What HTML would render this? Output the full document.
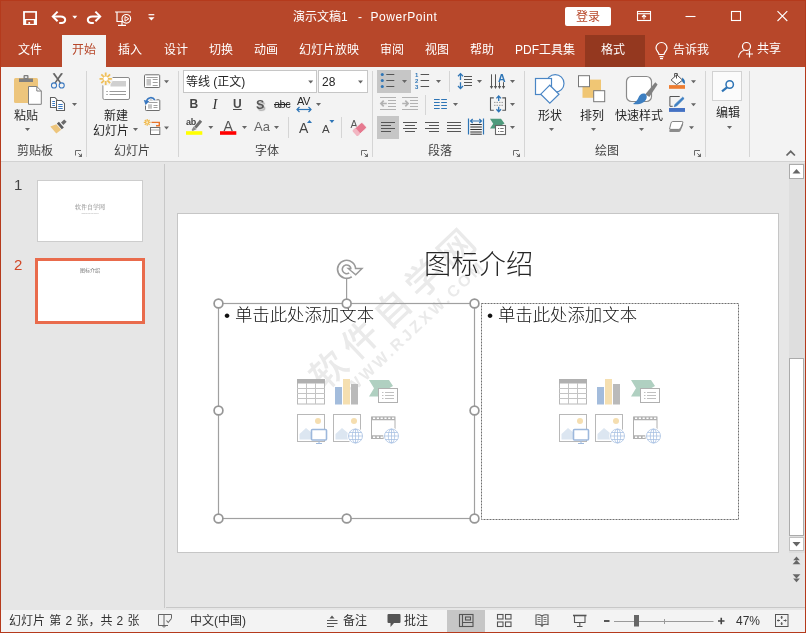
<!DOCTYPE html>
<html lang="zh-CN">
<head>
<meta charset="utf-8">
<title>演示文稿1 - PowerPoint</title>
<style>
*{box-sizing:border-box;margin:0;padding:0}
html,body{width:806px;height:633px;overflow:hidden;background:#e6e6e6}
body{font-family:"Liberation Sans","Noto Sans CJK SC",sans-serif;font-size:12px;color:#262626;position:relative}
#wrap{position:absolute;left:0;top:0;width:806px;height:633px;will-change:transform;overflow:hidden}
.abs{position:absolute}
#title{position:absolute;left:0;top:0;width:806px;height:67px;background:#b7472a}
.tt{position:absolute;color:#fff;white-space:nowrap;line-height:14px;font-size:12px}
.tab{position:absolute;top:43px;color:#fff;white-space:nowrap;line-height:14px;font-size:12px}
#ribbon{position:absolute;left:0;top:67px;width:806px;height:95px;background:#f3f3f3;border-bottom:1px solid #d2d2d2}
.gl{position:absolute;top:77px;font-size:12px;line-height:14px;color:#444;white-space:nowrap}
.sep{position:absolute;top:4px;width:1px;height:86px;background:#d5d5d5}
.lbl{position:absolute;font-size:12px;line-height:14px;color:#262626;white-space:nowrap}
#status{position:absolute;left:0;top:610px;width:806px;height:23px;background:#f3f3f3}
.st{position:absolute;top:4px;font-size:12px;line-height:14px;color:#333;white-space:nowrap}
#icons{position:absolute;left:0;top:0;width:806px;height:633px;pointer-events:none}
#frame{position:absolute;left:0;top:0;width:806px;height:633px;border:1px solid #b53a1c;pointer-events:none}
</style>
</head>
<body>
<div id="wrap">
<div id="title">
  <div class="tt" style="left:293px;top:10px">演示文稿1</div>
  <div class="tt" style="left:358px;top:10px">-</div>
  <div class="tt" style="left:370.5px;top:10px;letter-spacing:0.55px">PowerPoint</div>
  <div class="abs" style="left:565px;top:7px;width:46px;height:19px;background:#fff;border-radius:2px;color:#b7472a;font-size:12px;line-height:20px;text-align:center">登录</div>
  <div class="abs" style="left:62px;top:35px;width:44px;height:33px;background:#f3f3f3"></div>
  <div class="abs" style="left:585px;top:35px;width:60px;height:32px;background:#94381f"></div>
  <div class="tab" style="left:18px">文件</div>
  <div class="tab" style="left:72px;color:#b7472a">开始</div>
  <div class="tab" style="left:118px">插入</div>
  <div class="tab" style="left:164px">设计</div>
  <div class="tab" style="left:209px">切换</div>
  <div class="tab" style="left:254px">动画</div>
  <div class="tab" style="left:299px">幻灯片放映</div>
  <div class="tab" style="left:380px">审阅</div>
  <div class="tab" style="left:425px">视图</div>
  <div class="tab" style="left:470px">帮助</div>
  <div class="tab" style="left:515px">PDF工具集</div>
  <div class="tab" style="left:601px">格式</div>
  <div class="tab" style="left:673px">告诉我</div>
  <div class="tab" style="left:757px;top:42px">共享</div>
</div>
<div id="ribbon">
  <div class="sep" style="left:86px"></div>
  <div class="sep" style="left:178px"></div>
  <div class="sep" style="left:372px"></div>
  <div class="sep" style="left:524px"></div>
  <div class="sep" style="left:705px"></div>
  <div class="sep" style="left:749px"></div>
  <div class="abs" style="left:288px;top:50px;width:1px;height:21px;background:#d5d5d5"></div>
  <div class="abs" style="left:341px;top:50px;width:1px;height:21px;background:#d5d5d5"></div>
  <div class="abs" style="left:449px;top:4px;width:1px;height:21px;background:#d5d5d5"></div>
  <div class="abs" style="left:425px;top:28px;width:1px;height:20px;background:#d5d5d5"></div>
  <div class="abs" style="left:377px;top:3px;width:34px;height:23px;background:#c6c6c6"></div>
  <div class="abs" style="left:377px;top:49px;width:22px;height:23px;background:#c6c6c6"></div>
  <div class="abs" style="left:712px;top:4px;width:30px;height:30px;background:#fbfbfb;border:1px solid #d2d2d2"></div>
  <div class="gl" style="left:17px">剪贴板</div>
  <div class="gl" style="left:114px">幻灯片</div>
  <div class="gl" style="left:255px">字体</div>
  <div class="gl" style="left:428px">段落</div>
  <div class="gl" style="left:595px">绘图</div>
  <div class="lbl" style="left:14px;top:41.5px">粘贴</div>
  <div class="lbl" style="left:104px;top:41.5px">新建</div>
  <div class="lbl" style="left:93px;top:56.5px">幻灯片</div>
  <div class="lbl" style="left:538px;top:41.5px">形状</div>
  <div class="lbl" style="left:580px;top:41.5px">排列</div>
  <div class="lbl" style="left:615px;top:41.5px">快速样式</div>
  <div class="lbl" style="left:716px;top:39px">编辑</div>
  <div class="abs" style="left:183px;top:3px;width:134px;height:23px;background:#fff;border:1px solid #c6c6c6"></div>
  <div class="abs" style="left:318px;top:3px;width:50px;height:23px;background:#fff;border:1px solid #c6c6c6"></div>
  <div class="lbl" style="left:186px;top:8px">等线 (正文)</div>
  <div class="lbl" style="left:322px;top:8px">28</div>
  <div class="lbl" style="left:189.5px;top:30px;font-weight:bold;font-size:12px;color:#444">B</div>
  <div class="lbl" style="left:212.5px;top:30px;font-style:italic;font-family:'Liberation Serif',serif;font-size:14.5px;color:#333">I</div>
  <div class="lbl" style="left:233px;top:30px;text-decoration:underline;font-size:12px;font-weight:bold;color:#4a4a4a">U</div>
  <div class="lbl" style="left:256px;top:31px;font-weight:bold;font-size:12.5px;color:#555;text-shadow:1.5px 1.5px 1px #b0b0b0">S</div>
  <div class="lbl" style="left:274px;top:30px;text-decoration:line-through;font-size:11px;letter-spacing:-0.5px">abc</div>
  <div class="lbl" style="left:297px;top:27px;font-size:11px;letter-spacing:-0.5px">AV</div>
  <div class="lbl" style="left:186px;top:50px;font-size:9px;line-height:10px;color:#444;font-weight:bold;letter-spacing:-0.3px">ab</div>
  <div class="lbl" style="left:223.5px;top:52px;font-size:14px;line-height:14px;color:#555">A</div>
  <div class="lbl" style="left:254px;top:52.5px;font-size:13px;line-height:14px;color:#666">Aa</div>
  <div class="lbl" style="left:299px;top:54px;font-size:14px;line-height:14px;color:#444">A</div>
  <div class="lbl" style="left:322px;top:56px;font-size:11.5px;line-height:12px;color:#444">A</div>
  <div class="lbl" style="left:350.5px;top:52px;font-size:10.5px;line-height:10px;color:#555">A</div>
  <div class="lbl" style="left:498px;top:6px;font-size:10.5px;line-height:10px;font-weight:bold;color:#2e75b6">A</div>
  <div class="abs" style="left:415px;top:5px;font-size:6px;line-height:6px;font-weight:bold;color:#2e75b6">1<br>2<br>3</div>
</div>
<div class="abs" style="left:164px;top:164px;width:1px;height:444px;background:#c8c8c8"></div>
<div class="abs" style="left:166px;top:607px;width:640px;height:1px;background:#c8c8c8"></div>
<div class="abs" style="left:37px;top:180px;width:106px;height:62px;background:#fff;border:1px solid #cdcdcd"></div>
<div class="abs" style="left:74px;top:203px;width:32px;text-align:center;font-family:'Liberation Serif','Noto Serif CJK SC',serif;font-size:6px;line-height:8px;color:#888;white-space:nowrap">软件自学网</div>
<div class="abs" style="left:80px;top:212px;width:20px;text-align:center;font-size:2.5px;line-height:4px;color:#aaa;white-space:nowrap">www.rjzxw.com</div>
<div class="abs" style="left:35px;top:258px;width:110px;height:66px;background:#fff;border:3px solid #e96b4c"></div>
<div class="abs" style="left:80px;top:266px;width:20px;text-align:center;font-size:5px;line-height:8px;color:#777;white-space:nowrap">图标介绍</div>
<div class="abs" style="left:14px;top:176px;font-size:15px;line-height:18px;color:#444">1</div>
<div class="abs" style="left:14px;top:256px;font-size:15px;line-height:18px;color:#d24726">2</div>
<div class="abs" style="left:177px;top:213px;width:602px;height:340px;background:#fff;border:1px solid #c6c6c6;overflow:hidden">
  <div class="abs" style="left:215px;top:96px;width:0;height:0"><div id="wm1" style="position:absolute;transform:translate(-50%,-50%) rotate(-43.500deg);font-size:36px;line-height:38px;letter-spacing:8px;padding-left:8px;font-weight:500;color:#eaeaea;white-space:nowrap">软件自学网</div></div>
  <div class="abs" style="left:237px;top:114px;width:0;height:0"><div id="wm2" style="position:absolute;transform:translate(-50%,-50%) rotate(-43.300deg);font-size:16px;line-height:18px;letter-spacing:3px;padding-left:3px;font-weight:bold;color:#eaeaea;white-space:nowrap">WWW.RJZXW.COM</div></div>
</div>
<div class="abs" style="left:424px;top:246.5px;font-size:27.3px;line-height:36px;font-weight:300;color:#262626;white-space:nowrap">图标介绍</div>
<div class="abs" style="left:224px;top:303px;font-size:17.4px;line-height:24px;color:#111;white-space:nowrap;font-weight:300">• 单击此处添加文本</div>
<div class="abs" style="left:487px;top:303px;font-size:17.4px;line-height:24px;color:#111;white-space:nowrap;font-weight:300">• 单击此处添加文本</div>
<!-- scrollbar -->
<div class="abs" style="left:789px;top:163px;width:16px;height:390px;background:#dedede"></div>
<div class="abs" style="left:789px;top:164px;width:15px;height:15px;background:#fff;border:1px solid #ababab"></div>
<div class="abs" style="left:789px;top:537px;width:15px;height:14px;background:#fff;border:1px solid #c0c0c0"></div>
<div class="abs" style="left:789px;top:358px;width:15px;height:178px;background:#fff;border:1px solid #ababab"></div>
<div id="status">
  <div class="abs" style="left:447px;top:0;width:38px;height:23px;background:#c6c6c6"></div>
  <div class="st" style="left:9px;word-spacing:0.9px">幻灯片 第 2 张，共 2 张</div>
  <div class="st" style="left:190px">中文(中国)</div>
  <div class="st" style="left:343px">备注</div>
  <div class="st" style="left:404px">批注</div>
  <div class="st" style="left:736px">47%</div>
</div>
<svg id="icons" viewBox="0 0 806 633" width="806" height="633">
<defs>
  <polygon id="car" points="0,0 5,0 2.5,3" fill="#666"/>
  <g id="launch"><path d="M0.500,5.500 V0.500 H6" stroke="#6a6a6a" fill="none"/><path d="M3.300,3.300 L6,6" stroke="#6a6a6a" fill="none"/><polygon points="7,3.300 7,7 3.300,7" fill="#6a6a6a"/></g>
  <g id="globe" fill="#fff" stroke="#a6bfe1" stroke-width="0.75"><circle cx="0" cy="0" r="8.300" stroke="none"/><circle cx="0" cy="0" r="7"/><ellipse cx="0" cy="0" rx="3.2" ry="7" fill="none"/><path d="M-7,0 H7 M0,-7 V7 M-6,-3.5 H6 M-6,3.5 H6" fill="none"/></g>
  <g id="phicons">
    <!-- table -->
    <rect x="297.5" y="379.5" width="27" height="24.5" fill="#fff" stroke="#b8b8b8"/>
    <rect x="297" y="379" width="28" height="4.5" fill="#b0b0b0"/>
    <path d="M306.5,383 V404 M315.5,383 V404 M297,388.5 H325 M297,393.5 H325 M297,398.5 H325" stroke="#c4c4c4" fill="none"/>
    <!-- chart -->
    <rect x="335" y="387" width="7" height="17.5" fill="#a3bcdc"/>
    <rect x="343" y="379" width="7" height="25.5" fill="#f5dfb0"/>
    <rect x="351" y="384" width="7" height="20.5" fill="#bababa"/>
    <!-- smartart -->
    <polygon points="369,380 389,380 393,386 389.5,388 378.5,388 378.5,396.5 369,396.5 374,388.2" fill="#b0d0c1"/>
    <rect x="378.5" y="388.5" width="19" height="14" fill="#fff" stroke="#b0b0b0"/>
    <path d="M382,392.5 h1.5 M385,392.5 h9 M382,395.5 h1.5 M385,395.5 h9 M382,398.5 h1.5 M385,398.5 h9" stroke="#c0c0c0" fill="none"/>
    <!-- picture -->
    <rect x="297.5" y="414.5" width="27" height="27" fill="#fff" stroke="#b8b8b8"/>
    <circle cx="318" cy="421" r="3" fill="#f5deb0"/>
    <polygon points="299.5,439.5 299.5,434 306,428 312,433 312,439.5" fill="#dce6f1"/>
    <rect x="311.5" y="429.5" width="15" height="10.5" rx="1" fill="#fff" stroke="#9db8dc" stroke-width="1.6"/>
    <path d="M319,441 v2 M316,443.5 h6" stroke="#9db8dc" fill="none"/>
    <!-- online picture -->
    <rect x="333.5" y="414.5" width="27" height="27" fill="#fff" stroke="#b8b8b8"/>
    <circle cx="354" cy="421" r="3" fill="#f5deb0"/>
    <polygon points="335.5,439.5 335.5,434 342,428 348,433 348,439.5" fill="#dce6f1"/>
    <use href="#globe" x="355.5" y="436"/>
    <!-- video -->
    <rect x="371.5" y="417" width="23.5" height="21.5" fill="#fff" stroke="#b0b0b0"/>
    <path d="M372,418.5 h23 M372,437 h12" stroke="#b0b0b0" stroke-width="3.4" fill="none"/>
    <path d="M373,418.3 h22 M373,437.2 h11" stroke="#fff" stroke-width="1.6" stroke-dasharray="2.2 1.6" fill="none"/>
    <use href="#globe" x="391.5" y="436"/>
  </g>
  <g id="handle"><circle r="4.400" fill="#fff" stroke="#969696" stroke-width="1.700"/></g>
</defs>

<!-- ===== Title bar QAT ===== -->
<rect x="23.1" y="11.1" width="13.9" height="13.9" fill="#fff"/>
<rect x="24.9" y="12.7" width="10.3" height="6.3" fill="#b7472a"/>
<rect x="26.2" y="20.2" width="7.6" height="3.7" fill="#b7472a"/>
<rect x="28.4" y="22" width="1.7" height="1.9" fill="#fff"/>
<g fill="none" stroke="#fff" stroke-width="2" stroke-linecap="butt" stroke-linejoin="miter">
  <path d="M57.6,11.6 L52.8,16.4 L57.6,21.2"/>
  <path d="M53.2,16.4 H60.4 C63.6,16.4 65.2,18 65.2,19.9 C65.2,22 63.4,23.1 59.2,23.1"/>
  <path d="M95.4,11.6 L100.2,16.4 L95.4,21.2"/>
  <path d="M99.8,16.4 H92.6 C89.4,16.4 87.8,18 87.8,19.9 C87.8,22 89.6,23.1 93.8,23.1"/>
</g>
<polygon points="72.3,15.7 77.3,15.7 74.8,18.7" fill="#fff"/>
<g fill="none" stroke="#fff" stroke-width="1.2">
  <path d="M115,12 H131 M117,12.500 V21.500 H123.500 M122,21.500 V25 M118,25.300 H126"/>
  <circle cx="126.300" cy="18.800" r="4.300" fill="#b7472a"/>
  <polygon points="125,16.500 128.800,18.800 125,21.100" stroke-width="1" />
</g>
<path d="M148.500,14.700 H154.300" stroke="#fff" stroke-width="1.200"/>
<polygon points="148.300,17.300 154.500,17.300 151.400,20.600" fill="#fff"/>

<!-- window controls -->
<g fill="none" stroke="#fff" stroke-width="1.1">
  <rect x="637.500" y="11.500" width="13" height="9"/>
  <path d="M637.500,13.700 H650.500" />
  <path d="M644,19.200 V15.300 M642,17 L644,15 L646,17"/>
  <path d="M685.500,16.500 H695.500"/>
  <rect x="731.500" y="11.500" width="9" height="9"/>
  <path d="M777.500,11.200 L787.300,21 M787.300,11.200 L777.500,21"/>
</g>
<!-- tell me bulb & share -->
<g fill="none" stroke="#fff" stroke-width="1.200">
  <path d="M659,54.500 c0,-2.500 -3,-3.500 -3,-6.500 a5.500,5.500 0 0 1 11,0 c0,3 -3,4 -3,6.500 z"/>
  <path d="M659.500,56.700 H663.500 M660,58.700 H663"/>
  <circle cx="746.500" cy="46.500" r="4"/>
  <path d="M738.500,57.500 c0.500,-5 4,-7 6,-7"/>
  <path d="M749.500,50.500 V57.500 M746,54 H753"/>
</g>
<!-- ===== Ribbon: clipboard ===== -->
<rect x="14" y="78" width="24" height="25" rx="1.500" fill="#edc57c"/>
<path d="M19,82 v-3.500 h4.500 v-2.500 q0,-1 1,-1 h3 q1,0 1,1 v2.500 h4.500 v3.500 z" fill="#7f7f7f"/>
<rect x="24.800" y="76.300" width="2.400" height="1.600" fill="#f3f3f3"/>
<path d="M28.5,86.5 h8.3 l4.5,4.5 v13.3 h-12.8 z" fill="#fff" stroke="#7f7f7f" stroke-width="1"/>
<path d="M36.8,86.5 v4.5 h4.5" fill="none" stroke="#7f7f7f" stroke-width="1"/>
<use href="#car" x="25" y="128"/>
<!-- scissors -->
<g fill="#666"><polygon points="52.6,73.6 54.6,72.9 61.6,83.2 60.4,84"/><polygon points="63,73.6 61,72.9 54,83.2 55.2,84"/></g>
<g fill="#f3f3f3" stroke="#3a78c0" stroke-width="1.05"><circle cx="54" cy="85.4" r="2.55"/><circle cx="61.7" cy="85.4" r="2.55"/></g>
<!-- copy -->
<g fill="#fff" stroke="#5f5f5f" stroke-width="1.05">
  <path d="M50.5,97.5 h4.3 l2.2,2.200 v7.800 h-6.500 z"/>
  <path d="M56.5,100.5 h5 l3,3 v7 h-8 z"/>
</g>
<path d="M52.3,101.500 h2.700 M52.3,103.500 h2.700 M52.3,105.500 h2.700 M58.300,104.500 h4.400 M58.300,106.500 h4.400 M58.300,108.500 h4.400" stroke="#3a78c0" stroke-width="1" fill="none"/>
<use href="#car" x="72" y="103"/>
<!-- format painter -->
<path d="M65.4,120.600 L62.200,123.800" stroke="#6a6a6a" stroke-width="3.400" fill="none"/>
<path d="M57.900,122.700 L62.800,128.300" stroke="#5e5e5e" stroke-width="2.800" fill="none"/>
<polygon points="56.300,124.200 61.200,129.800 56.300,133.600 50.300,126.600" fill="#edc57c"/>

<!-- ===== slides ===== -->
<rect x="102.9" y="77.5" width="26.6" height="22" rx="1.5" fill="#fff" stroke="#8a8a8a" stroke-width="1"/>
<rect x="110.5" y="81" width="15.5" height="5.5" fill="#d0d0d0"/>
<path d="M106.3,91.5 h1.5 M109.5,91.5 h16.5 M106.3,94.5 h1.5 M109.5,94.5 h16.5" stroke="#9a9a9a" fill="none"/>
<circle cx="105.7" cy="78.800" r="7.2" fill="#f3f3f3"/>
<g stroke="#f0c05a" stroke-width="1.800" fill="none"><path d="M105.7,72.600 v12.400 M99.5,78.800 h12.400 M101.300,74.400 l8.800,8.800 M110.100,74.400 l-8.800,8.800"/></g>
<circle cx="105.7" cy="78.800" r="2.300" fill="#fff"/>
<use href="#car" x="133" y="128"/>
<!-- layout -->
<rect x="144.5" y="74.800" width="15.2" height="12.700" rx="0.8" fill="#fff" stroke="#6e6e6e"/>
<rect x="146.5" y="79" width="4.5" height="6.500" fill="#c4c4c4"/>
<path d="M146.5,77.5 h11.200 M152.700,79.500 h5 M152.700,82.500 h5 M152.700,85.500 h5" stroke="#a0a0a0" fill="none"/>
<use href="#car" x="164" y="80.200"/>
<!-- reset -->
<rect x="145.5" y="99.800" width="14.3" height="10.700" rx="0.8" fill="#fff" stroke="#6e6e6e"/>
<rect x="148" y="104.300" width="4" height="4.400" fill="#c4c4c4"/>
<path d="M148,102.500 h9.500 M153.500,105.500 h4 M153.500,107.500 h4" stroke="#a0a0a0" fill="none"/>
<path d="M155,100.300 C153,96.300 147.300,96.500 146.300,102" stroke="#f3f3f3" stroke-width="4" fill="none"/>
<polygon points="142.800,99.200 150.300,100.600 145.300,106" fill="#f3f3f3"/>
<path d="M154.800,100 C152.800,96.600 147.600,96.800 146.500,101.300" stroke="#3a78c0" stroke-width="1.600" fill="none"/>
<polygon points="143.800,100 149.400,101.200 145.500,105" fill="#3a78c0"/>
<!-- section -->
<g stroke="#f0b94a" stroke-width="1.200" fill="none"><path d="M147.200,119 v6.800 M143.800,122.400 h6.800 M144.800,120 l4.800,4.800 M149.600,120 l-4.800,4.800"/></g>
<circle cx="147.200" cy="122.400" r="1.100" fill="#fbe9c3"/>
<path d="M151.500,122.400 h7.800 v3.300 h-3.300" stroke="#e8742a" stroke-width="1.400" fill="none"/>
<rect x="150.500" y="127.500" width="9.300" height="7" fill="#fff" stroke="#6e6e6e"/>
<path d="M151,130 h8.500" stroke="#bbb" stroke-width="1.200" fill="none"/>
<use href="#car" x="164" y="126.500"/>

<!-- ===== font ===== -->
<use href="#car" x="308.2" y="80.5"/>
<use href="#car" x="358" y="80.5"/>
<path d="M297,109.500 h14" stroke="#2e75b6" stroke-width="1.200" fill="none"/>
<path d="M299.500,107 L297,109.500 L299.500,112 M308.500,107 L311,109.500 L308.500,112" stroke="#2e75b6" stroke-width="1.200" fill="none"/>
<use href="#car" x="316" y="103"/>
<!-- highlighter -->
<path d="M201,120.8 L195.3,127.6" stroke="#6e6e6e" stroke-width="3" fill="none"/>
<polygon points="193.6,126.6 196.6,129.2 192.6,131 191.6,130" fill="#8a8a8a"/>
<rect x="186" y="131.200" width="16.300" height="3.600" fill="#ffff00"/>
<use href="#car" x="208.300" y="126"/>
<rect x="220" y="131.200" width="16.300" height="3.600" fill="#ff0000"/>
<use href="#car" x="242" y="126"/>
<use href="#car" x="274" y="126"/>
<polygon points="307,123 312,123 309.500,120" fill="#2e75b6"/>
<polygon points="329.400,120 334.400,120 331.900,123" fill="#2e75b6"/>
<!-- clear formatting eraser -->
<g transform="translate(359.6,129.2) rotate(-42)"><rect x="-6.500" y="-3.800" width="13" height="7.600" rx="1.300" fill="#e6798f" stroke="#f3f3f3" stroke-width="0.800"/><rect x="-6.500" y="-3.800" width="4.300" height="7.600" rx="1" fill="#f2b6c2"/></g>
<use href="#launch" x="75" y="150"/>
<use href="#launch" x="361" y="150"/>
<use href="#launch" x="513" y="150"/>
<use href="#launch" x="694" y="150"/>
<!-- ===== paragraph ===== -->
<g fill="#2e75b6"><circle cx="382.3" cy="74.5" r="1.55"/><circle cx="382.3" cy="80.5" r="1.55"/><circle cx="382.3" cy="86.5" r="1.55"/></g>
<path d="M386.300,74.500 h8 M386.300,80.500 h8 M386.300,86.500 h8" stroke="#555" stroke-width="1" fill="none"/>
<use href="#car" x="402" y="80" fill="#333"/>
<path d="M420.600,74.500 h8.500 M420.600,80.500 h8.500 M420.600,86.500 h8.500" stroke="#555" stroke-width="1" fill="none"/>
<use href="#car" x="436" y="80"/>
<!-- line spacing -->
<g stroke="#2e75b6" stroke-width="1.3" fill="none"><path d="M460.5,73.6 V80 M458,76.2 L460.5,73.6 L463,76.2 M460.5,82.2 V88.6 M458,86 L460.5,88.6 L463,86"/></g>
<path d="M464,76.5 h8 M464,79.5 h8 M464,82.5 h8 M464,85.5 h8" stroke="#555" fill="none"/>
<use href="#car" x="477" y="80"/>
<!-- text direction -->
<g stroke="#555" stroke-width="1" fill="none"><path d="M491.5,74.3 V87.5 M495.5,74.3 V87.5 M499.5,82.2 V87.5 M503.5,82.2 V87.5"/></g>
<g fill="#555"><polygon points="489.8,86 493.2,86 491.5,89"/><polygon points="493.8,86 497.2,86 495.5,89"/><polygon points="497.8,86 501.200,86 499.5,89"/><polygon points="501.8,86 505.2,86 503.5,89"/></g>
<use href="#car" x="510" y="80"/>
<!-- indent -->
<g stroke="#b2b2b2" stroke-width="1" fill="none">
  <path d="M380,97.5 h16 M388,100.5 h8 M388,103.5 h8 M388,106.5 h8 M380,109.5 h16"/>
  <path d="M402,97.5 h16 M410,100.5 h8 M410,103.5 h8 M410,106.5 h8 M402,109.5 h16"/>
</g>
<g stroke="#b2b2b2" stroke-width="1.7" fill="none">
  <path d="M386.8,103.5 H381.5 M383.7,100.700 L380.900,103.5 L383.7,106.300"/>
  <path d="M402.2,103.5 H407.5 M405.3,100.700 L408.100,103.5 L405.3,106.300"/>
</g>
<!-- columns -->
<path d="M434,99.5 h5.700 M441.2,99.5 h5.700 M434,102.5 h5.700 M441.2,102.5 h5.700 M434,105.5 h5.700 M441.2,105.5 h5.700 M434,108.5 h5.700 M441.2,108.5 h5.700" stroke="#2e75b6" stroke-width="1.100" fill="none"/>
<use href="#car" x="453" y="103"/>
<!-- align text -->
<g stroke="#555" fill="none" stroke-width="1.1"><path d="M493.8,97.9 H490.5 V110.2 H493.8 M502.3,97.9 H505.5 V110.2 H502.3"/></g>
<path d="M494,102.4 h9.500 M494,105.3 h9.500" stroke="#9a9a9a" stroke-dasharray="1.5 1" fill="none"/>
<g stroke="#2e75b6" stroke-width="1.3" fill="none"><path d="M498.7,96 V101 M496.400,98.400 L498.7,96 L501,98.400 M498.7,106.7 V111.7 M496.400,109.300 L498.7,111.7 L501,109.300"/></g>
<use href="#car" x="510" y="103"/>
<!-- alignment row -->
<g stroke="#555" stroke-width="1" fill="none">
  <path d="M381,122.500 h14 M381,125.500 h10 M381,128.500 h14 M381,131.500 h10"/>
  <path d="M403,122.500 h14 M405,125.500 h10 M403,128.500 h14 M405,131.500 h10"/>
  <path d="M425,122.500 h14 M429,125.500 h10 M425,128.500 h14 M429,131.500 h10"/>
  <path d="M447,122.500 h14 M447,125.500 h14 M447,128.500 h14 M447,131.500 h14"/>
  <path d="M470.3,124.5 h11.5 M470.3,127 h11.5 M470.3,129.5 h11.5 M470.3,132 h11.5 M470.3,134.2 h11.5" stroke="#333" stroke-width="1"/>
</g>
<g stroke="#2e75b6" stroke-width="1.200" fill="none"><path d="M468.500,118.500 V134.500 M483.500,118.500 V134.500 M470.500,121 h11 M472.700,119 L470.500,121 L472.700,123 M479.300,119 L481.500,121 L479.300,123"/></g>
<!-- smartart -->
<polygon points="490,118.800 501,118.800 504.500,123.500 501,125.500 495.500,125.500 495.500,128.500 490,128.500 493.200,123.700" fill="#4e9a7c"/>
<rect x="495.5" y="125.5" width="10" height="9" fill="#fff" stroke="#666" stroke-width="1.1"/>
<path d="M498,128.5 h1.2 M500.2,128.5 h3.5 M498,131.5 h1.2 M500.2,131.5 h3.5" stroke="#777" fill="none"/>
<use href="#car" x="510" y="126"/>

<!-- ===== drawing ===== -->
<circle cx="555.200" cy="83.400" r="8.800" fill="#fff" stroke="#4a86c5" stroke-width="1.200"/>
<rect x="535.5" y="78.5" width="16" height="16" fill="#fff" stroke="#4a86c5" stroke-width="1.200"/>
<polygon points="549.8,85.2 559,94.2 549.8,103.2 540.8,94.2" fill="#fff" stroke="#4a86c5" stroke-width="1.200"/>
<use href="#car" x="549" y="128"/>
<rect x="582.500" y="79.600" width="18.500" height="18.200" fill="#f0c674"/>
<rect x="578.500" y="75.700" width="11" height="11" fill="#fff" stroke="#777"/>
<rect x="593.700" y="90.700" width="11" height="11" fill="#fff" stroke="#777"/>
<use href="#car" x="591" y="128"/>
<rect x="626.500" y="76.500" width="25" height="25" rx="5" fill="#fff" stroke="#8a8a8a" stroke-width="1.200"/>
<polygon points="655.3,82.3 657.6,84.6 649.3,97 645.3,94.3" fill="#808080"/>
<path d="M645.500,94 c-3,-1.500 -6,0.500 -7,3.500 c-0.800,2.500 -3,4.500 -5.500,6.500 c6,1 12,-1 13.500,-5.500 c0.500,-1.800 0.300,-3.500 -1,-4.500 z" fill="#3d7fc1"/>
<use href="#car" x="639" y="128"/>
<!-- fill -->
<path d="M674.600,78.300 v-4.800 h2.800 v4" fill="none" stroke="#555" stroke-width="1"/>
<polygon points="676.800,74.800 682.600,80.200 676.600,84.600 671.100,80" fill="#fff" stroke="#555" stroke-width="1"/>
<path d="M676.500,75 v3.500" stroke="#555" fill="none"/>
<path d="M682.300,77.600 q3.600,2.600 2.300,6.600 q-2,-1.500 -2.800,-3.400 z" fill="#2e74b5"/>
<rect x="669" y="85.100" width="16" height="3.700" fill="#ed7d31"/>
<use href="#car" x="691" y="80.200"/>
<!-- outline -->
<path d="M679.700,96.500 H669.900 V106.300 H672.700" stroke="#555" fill="none"/>
<path d="M682.700,97.200 l1.400,1.300 l-7.300,7.200 l-2.600,1 l1,-2.500 z" fill="#3d7fc1" stroke="#3d7fc1" stroke-width="0.800"/>
<rect x="669" y="108" width="16" height="3.900" fill="#4472c4"/>
<use href="#car" x="691" y="103.200"/>
<!-- effects -->
<g transform="translate(669,121)">
  <path d="M3.500,2.500 h9.500 q1.800,0 1,1.600 l-2.300,5.400 q-0.700,1.500 -2.300,1.500 h-8 q-1.800,0 -1,-1.600 l1.200,-5.200 q0.400,-1.700 1.900,-1.700 z" fill="#8c8c8c"/>
  <path d="M3.800,0.500 h9 q1.700,0 1,1.500 l-2.200,5 q-0.600,1.400 -2.200,1.400 h-7.600 q-1.700,0 -1,-1.500 l1.200,-4.800 q0.400,-1.600 1.800,-1.600 z" fill="#fff" stroke="#777" stroke-width="0.900"/>
</g>
<use href="#car" x="689" y="126.200"/>
<!-- edit -->
<circle cx="729.700" cy="84.500" r="3.700" fill="none" stroke="#2e74b5" stroke-width="1.500"/>
<path d="M727,87.300 L722,91.300" stroke="#2e74b5" stroke-width="2.200" fill="none"/>
<use href="#car" x="727" y="126"/>
<path d="M786.500,155.500 L790.700,151.300 L794.900,155.500" stroke="#666" stroke-width="1.700" fill="none"/>
<!-- ===== slide editing ===== -->
<rect x="481.500" y="303.500" width="257" height="216" fill="none" stroke="#707070" stroke-width="1" stroke-dasharray="2 1"/>
<rect x="218.500" y="303.500" width="256" height="215" fill="none" stroke="#a0a0a0" stroke-width="1.200"/>
<path d="M346.600,279 V299" stroke="#9e9e9e" stroke-width="1.200" fill="none"/>
<use href="#phicons"/>
<use href="#phicons" x="262"/>
<use href="#handle" x="218.500" y="303.500"/>
<use href="#handle" x="346.700" y="303.500"/>
<use href="#handle" x="474.500" y="303.500"/>
<use href="#handle" x="218.500" y="410.500"/>
<use href="#handle" x="474.500" y="410.500"/>
<use href="#handle" x="218.500" y="518.500"/>
<use href="#handle" x="346.700" y="518.500"/>
<use href="#handle" x="474.500" y="518.500"/>
<!-- rotate handle -->
<path d="M353.300,269.300 A6.700,6.700 0 1 0 350.450,274.800" fill="none" stroke="#9a9a9a" stroke-width="6.300"/>
<polygon points="348.300,268.500 362,268.500 355.700,274.800" fill="#fff" stroke="#9a9a9a" stroke-width="1.500"/>
<path d="M353.300,270.800 V269.300 A6.700,6.700 0 1 0 350.450,274.800" fill="none" stroke="#fff" stroke-width="3.100"/>
<!-- scrollbar arrows -->
<polygon points="792.500,173.500 800.500,173.500 796.500,169" fill="#666"/>
<polygon points="792.500,542 800.500,542 796.500,546.500" fill="#666"/>
<g fill="#666"><polygon points="793.2,560.2 799.8,560.2 796.5,556.4"/><polygon points="792.6,564.3 800.4,564.3 796.5,560"/>
<polygon points="792.6,574.3 800.4,574.3 796.5,578.6"/><polygon points="793.2,578.4 799.8,578.4 796.5,582.2"/></g>
<!-- ===== status bar ===== -->
<g fill="none" stroke="#666" stroke-width="1">
  <path d="M158.500,614.500 h5.500 v11 h-5.500 z M164,614.500 h7.500 v4 M164,625.500 h4"/>
  <path d="M162,625.500 l2,1.800 l2,-1.800"/>
  <path d="M166.500,620.500 l1.700,2 l3.300,-4" stroke-width="1.100"/>
</g>
<path d="M332,615.500 L329.500,618.500 h5 z" fill="#555"/>
<path d="M327,620.500 h10.500 M327,623.500 h10.500 M327,626.500 h7" stroke="#555" fill="none"/>
<path d="M388,614 h11.500 q1,0 1,1 v7 q0,1 -1,1 h-5.500 l-3.500,4 v-4 h-2 q-1,0 -1,-1 v-7 q0,-1 1,-1 z" fill="#555"/>
<g fill="none" stroke="#555" stroke-width="1.100">
  <rect x="459.500" y="614.500" width="13.500" height="12"/>
  <path d="M462.500,614.500 v12 M462.500,622.500 h10.500"/>
  <rect x="465.500" y="617" width="5" height="3"/>
  <rect x="497.500" y="614.500" width="5.500" height="4.500"/><rect x="505.500" y="614.500" width="5.500" height="4.500"/>
  <rect x="497.500" y="622" width="5.500" height="4.500"/><rect x="505.500" y="622" width="5.500" height="4.500"/>
  <path d="M542,616 c-2,-1.500 -4,-1.500 -6,-1 v9.500 c2,-0.500 4,-0.500 6,1 c2,-1.500 4,-1.500 6,-1 v-9.500 c-2,-0.500 -4,-0.500 -6,1 v11"/>
  <path d="M537.500,617.500 h3 M537.500,619.500 h3 M537.500,621.500 h3 M543.500,617.500 h3 M543.500,619.500 h3 M543.500,621.500 h3" stroke-width="0.800"/>
  <path d="M573,615.500 h13.500" stroke-width="1.600"/>
  <path d="M574.500,616 v6.500 h10.500 v-6.500 M579.800,622.500 v3.500 M577,626.500 h5.500"/>
</g>
<path d="M604,621 h5.500" stroke="#444" stroke-width="1.800"/>
<path d="M614,621.500 h99.500" stroke="#9a9a9a" stroke-width="1"/>
<path d="M664.500,619 v5" stroke="#9a9a9a"/>
<rect x="634" y="615" width="5" height="11.500" fill="#666"/>
<path d="M718,621 h6.500 M721.250,617.700 v6.600" stroke="#444" stroke-width="1.600"/>
<g fill="none" stroke="#555" stroke-width="1">
  <rect x="775.500" y="614.500" width="12.500" height="12"/>
  <path d="M781.700,616 v3 M781.700,622 v3 M777,620.500 h3 M783.500,620.500 h3"/>
</g>
<g fill="#555"><polygon points="780.200,617.500 783.200,617.500 781.700,616"/><polygon points="780.200,623.500 783.200,623.500 781.700,625"/><polygon points="778.500,619 778.500,622 777,620.500"/><polygon points="785,619 785,622 786.500,620.500"/></g>
</svg>
<div id="frame"></div>
</div><!--wrap-->
</body>
</html>
